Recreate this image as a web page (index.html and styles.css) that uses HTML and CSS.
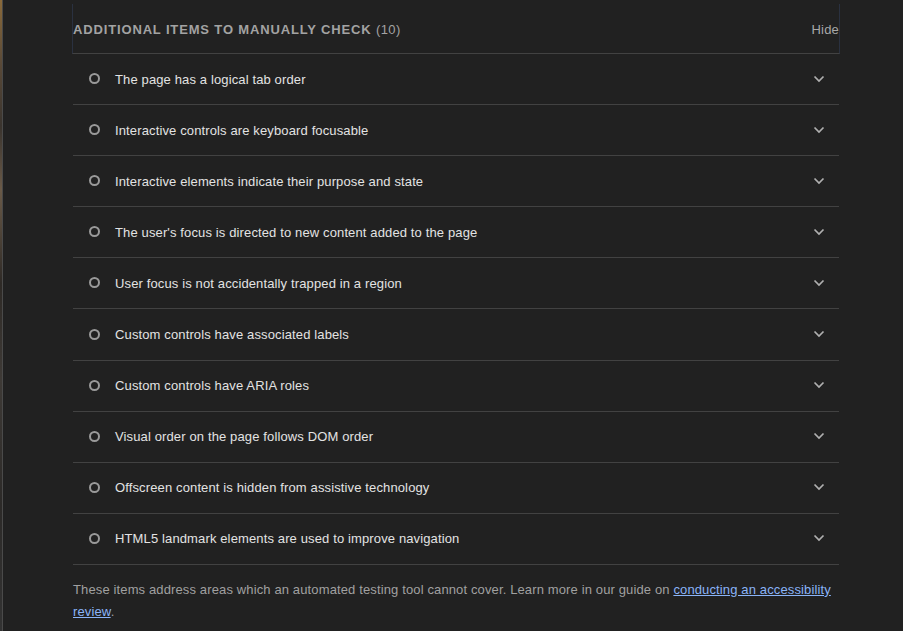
FILE: index.html
```html
<!DOCTYPE html>
<html>
<head>
<meta charset="utf-8">
<link rel="stylesheet" href="styles.css">
</head>
<body>
<div class="edge"></div>
<main class="panel">
  <div class="group-head">
    <span class="title">Additional items to manually check <span class="count">(10)</span></span>
    <span class="hide">Hide</span>
  </div>
  <ul class="items">
    <li class="item"><span class="ring"></span><span class="label">The page has a logical tab order</span><svg class="chev" viewBox="0 0 12 8"><path d="M1.5 1.5 L6 6 L10.5 1.5"/></svg></li>
    <li class="item"><span class="ring"></span><span class="label">Interactive controls are keyboard focusable</span><svg class="chev" viewBox="0 0 12 8"><path d="M1.5 1.5 L6 6 L10.5 1.5"/></svg></li>
    <li class="item"><span class="ring"></span><span class="label">Interactive elements indicate their purpose and state</span><svg class="chev" viewBox="0 0 12 8"><path d="M1.5 1.5 L6 6 L10.5 1.5"/></svg></li>
    <li class="item"><span class="ring"></span><span class="label">The user's focus is directed to new content added to the page</span><svg class="chev" viewBox="0 0 12 8"><path d="M1.5 1.5 L6 6 L10.5 1.5"/></svg></li>
    <li class="item"><span class="ring"></span><span class="label">User focus is not accidentally trapped in a region</span><svg class="chev" viewBox="0 0 12 8"><path d="M1.5 1.5 L6 6 L10.5 1.5"/></svg></li>
    <li class="item"><span class="ring"></span><span class="label">Custom controls have associated labels</span><svg class="chev" viewBox="0 0 12 8"><path d="M1.5 1.5 L6 6 L10.5 1.5"/></svg></li>
    <li class="item"><span class="ring"></span><span class="label">Custom controls have ARIA roles</span><svg class="chev" viewBox="0 0 12 8"><path d="M1.5 1.5 L6 6 L10.5 1.5"/></svg></li>
    <li class="item"><span class="ring"></span><span class="label">Visual order on the page follows DOM order</span><svg class="chev" viewBox="0 0 12 8"><path d="M1.5 1.5 L6 6 L10.5 1.5"/></svg></li>
    <li class="item"><span class="ring"></span><span class="label">Offscreen content is hidden from assistive technology</span><svg class="chev" viewBox="0 0 12 8"><path d="M1.5 1.5 L6 6 L10.5 1.5"/></svg></li>
    <li class="item"><span class="ring"></span><span class="label">HTML5 landmark elements are used to improve navigation</span><svg class="chev" viewBox="0 0 12 8"><path d="M1.5 1.5 L6 6 L10.5 1.5"/></svg></li>
  </ul>
  <p class="note">These items address areas which an automated testing tool cannot cover. Learn more in our guide on <a href="#">conducting an accessibility review</a>.</p>
</main>
</body>
</html>
```

FILE: styles.css
```css
html, body {
  margin: 0;
  padding: 0;
  background: #212121;
  height: 100%;
  overflow: hidden;
}
body {
  font-family: "Liberation Sans", Arial, sans-serif;
  font-size: 13px;
  letter-spacing: 0.13px;
  display: flex;
}
.edge {
  width: 2px;
  flex: none;
  background: linear-gradient(to bottom, #8a6a3a 0%, #5a4a38 10%, #3a342e 20%, #6a5a48 30%, #2e2a26 45%, #3e3a36 60%, #2c2a28 80%, #333 100%);
  border-right: 1px solid #4a4a4a;
}
.panel {
  margin-left: 69px;
  width: 768px;
}
.group-head {
  height: 49px;
  margin-top: 4px;
  border-left: 1px solid #2a3140;
  border-right: 1px solid #2a3140;
  border-bottom: 1px solid #424242;
  display: flex;
  justify-content: space-between;
  align-items: center;
  padding: 2px 0 0 0;
  box-sizing: border-box;
  height: 50px;
}
.title {
  text-transform: uppercase;
  font-weight: bold;
  letter-spacing: 0.85px;
  color: #a3a3a3;
  font-size: 13px;
}
.count {
  font-weight: normal;
  letter-spacing: 0.4px;
}
.hide {
  color: #a8a8a8;
  font-size: 13px;
  letter-spacing: 0.2px;
}
.items {
  list-style: none;
  margin: 0 1px 0 1px;
  padding: 0;
}
.item {
  height: 50.1px;
  border-bottom: 1px solid #424242;
  display: flex;
  align-items: center;
  padding: 0 14px 0 16px;
}
.ring {
  width: 7px;
  height: 7px;
  border: 2px solid #9a9a9a;
  border-radius: 50%;
  flex: none;
  margin-right: 15px;
  margin-top: -1px;
}
.label {
  color: #e3e3e3;
  flex: 1;
}
.chev {
  width: 12px;
  height: 8px;
  fill: none;
  stroke: #b0b0b0;
  stroke-width: 1.7;
  margin-top: -1px;
}
.note {
  margin: 14px 0 0 1px;
  color: #a0a0a0;
  line-height: 22px;
  width: 768px;
}
.note a {
  color: #8ab4f8;
  text-decoration: underline;
}
```
